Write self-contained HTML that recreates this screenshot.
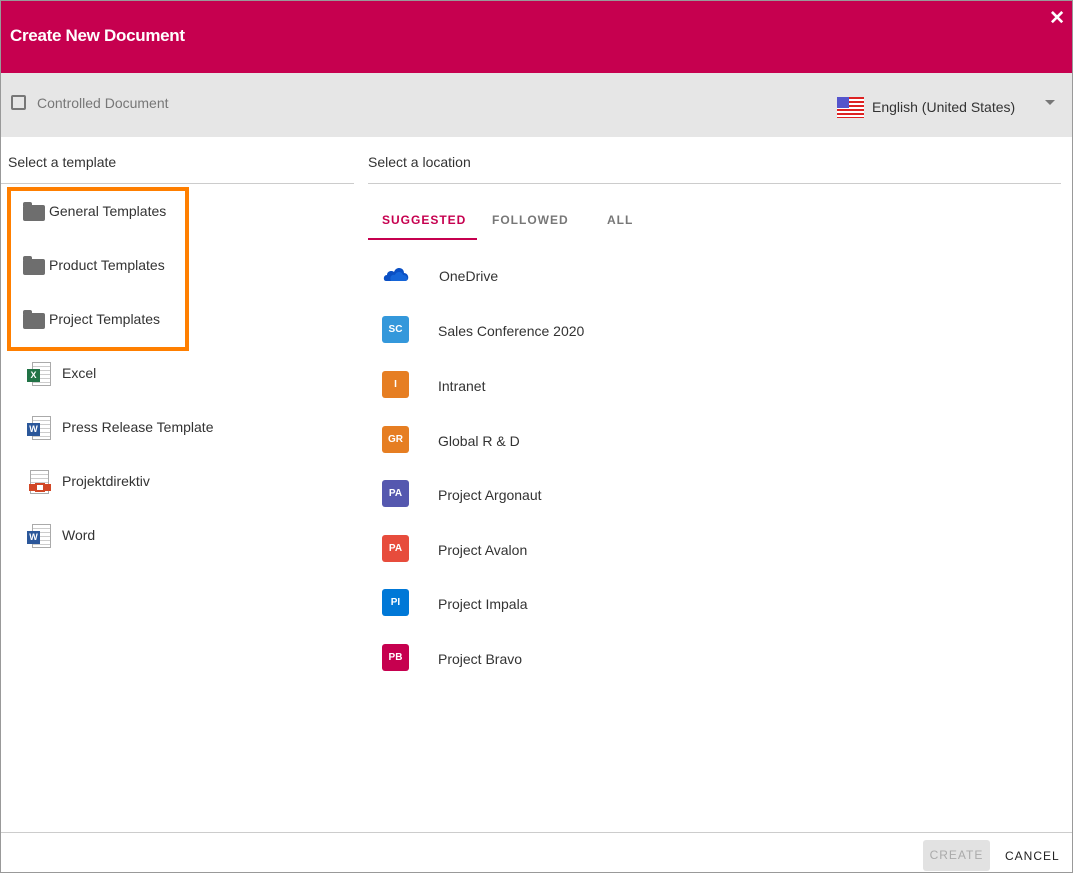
<!DOCTYPE html>
<html><head><style>
*{margin:0;padding:0;box-sizing:border-box}
body{width:1073px;height:873px;font-family:"Liberation Sans",sans-serif;background:#fff;position:relative;overflow:hidden;color:#333;font-size:14px}
.frame{position:absolute;left:0;top:0;width:1073px;height:873px;border:1px solid #999}
.hdr{position:absolute;left:1px;top:1px;width:1071px;height:72px;background:#c6004f;color:#fff}
.hdr h1{position:absolute;left:9px;top:25px;font-size:17px;font-weight:bold;letter-spacing:-0.3px}
.x{position:absolute;right:7px;top:6px;font-size:19px;font-weight:bold}
.bar{position:absolute;left:1px;top:73px;width:1071px;height:64px;background:#e6e6e6}
.cb{position:absolute;left:10px;top:22px;width:15px;height:15px;border:2px solid #777;border-radius:2px}
.abs{position:absolute;white-space:nowrap}
.flag{position:absolute;left:836px;top:24px;width:27px;height:21px;background:repeating-linear-gradient(#d22 0 2px,#fff 2px 4px)}
.flag:before{content:"";position:absolute;left:0;top:0;width:12px;height:11px;background:#55c}
.line{position:absolute;height:1px;background:#ccc}
.row{position:absolute;white-space:nowrap;font-size:14px;color:#333}
.fold{position:absolute;width:22px;height:16px;background:#6e6e6e;border-radius:2px}
.fold:before{content:"";position:absolute;left:0;top:-3px;width:9px;height:4px;background:#6e6e6e;border-radius:2px 2px 0 0}
.doc{position:absolute;width:19px;height:24px;border:1px solid #aaa;background:repeating-linear-gradient(#fff 0 3px,#ccc 3px 4px)}
.badge{position:absolute;left:11px;top:8px;width:13px;height:13px;color:#fff;font-size:9px;font-weight:bold;text-align:center;line-height:13px}
.sq{position:absolute;left:382px;width:27px;height:27px;border-radius:3px;color:#fff;font-size:10px;font-weight:bold;text-align:center;line-height:28px}
.tab{position:absolute;top:213px;font-size:12px;letter-spacing:1px;font-weight:bold;color:#777}
</style></head><body>
<div class="hdr"><h1>Create New Document</h1><div class="x">✕</div></div>
<div class="bar"><div class="cb"></div><div class="abs" style="left:36px;top:22px;color:#777">Controlled Document</div>
<div class="flag"></div><div class="abs" style="left:871px;top:26px;color:#333">English (United States)</div>
<div class="abs" style="left:1044px;top:27px;width:0;height:0;border:5px solid transparent;border-top-color:#777"></div></div>
<div class="abs" style="left:8px;top:154px">Select a template</div>
<div class="line" style="left:1px;top:183px;width:353px"></div>
<div class="abs" style="left:368px;top:154px">Select a location</div>
<div class="line" style="left:368px;top:183px;width:693px"></div>
<div style="position:absolute;left:7px;top:187px;width:182px;height:164px;border:4px solid #ff7f00"></div>
<div class="fold" style="left:23px;top:205px"></div><div class="row" style="left:49px;top:203px">General Templates</div>
<div class="fold" style="left:23px;top:259px"></div><div class="row" style="left:49px;top:257px">Product Templates</div>
<div class="fold" style="left:23px;top:313px"></div><div class="row" style="left:49px;top:311px">Project Templates</div>
<div class="doc" style="left:32px;top:362px"></div><div class="badge" style="left:27px;top:369px;background:#217346">X</div><div class="row" style="left:62px;top:365px">Excel</div>
<div class="doc" style="left:32px;top:416px"></div><div class="badge" style="left:27px;top:423px;background:#2b579a">W</div><div class="row" style="left:62px;top:419px">Press Release Template</div>
<div class="doc" style="left:30px;top:470px"></div><div style="position:absolute;left:29px;top:484px;width:22px;height:7px;background:#d24726"></div><div style="position:absolute;left:35px;top:483px;width:10px;height:9px;border:2px solid #d24726;background:#fff"></div><div class="row" style="left:62px;top:473px">Projektdirektiv</div>
<div class="doc" style="left:32px;top:524px"></div><div class="badge" style="left:27px;top:531px;background:#2b579a">W</div><div class="row" style="left:62px;top:527px">Word</div>
<div class="tab" style="left:382px;color:#c6004f">SUGGESTED</div>
<div class="tab" style="left:492px">FOLLOWED</div>
<div class="tab" style="left:607px">ALL</div>
<div style="position:absolute;left:368px;top:238px;width:109px;height:2px;background:#c6004f"></div>
<svg style="position:absolute;left:383px;top:265px" width="28" height="18" viewBox="0 0 28 18"><path d="M3 16 C0 16 0 10 4 10 C4 6 9 5 11 7 C13 1 21 2 21 8 C26 8 27 16 22 16 Z" fill="#0a4fc4"/><path d="M8 16 C6 12 9 9 12 10 C13 6 19 6 20 10 C25 10 26 16 22 16Z" fill="#1565d8"/></svg>
<div class="row" style="left:439px;top:268px">OneDrive</div>
<div class="sq" style="top:316px;background:#3498db">SC</div><div class="row" style="left:438px;top:323px">Sales Conference 2020</div>
<div class="sq" style="top:371px;background:#e67e22">I</div><div class="row" style="left:438px;top:378px">Intranet</div>
<div class="sq" style="top:426px;background:#e67e22">GR</div><div class="row" style="left:438px;top:433px">Global R &amp; D</div>
<div class="sq" style="top:480px;background:#5558af">PA</div><div class="row" style="left:438px;top:487px">Project Argonaut</div>
<div class="sq" style="top:535px;background:#e74c3c">PA</div><div class="row" style="left:438px;top:542px">Project Avalon</div>
<div class="sq" style="top:589px;background:#0078d7">PI</div><div class="row" style="left:438px;top:596px">Project Impala</div>
<div class="sq" style="top:644px;background:#c6004f">PB</div><div class="row" style="left:438px;top:651px">Project Bravo</div>
<div class="line" style="left:1px;top:832px;width:1071px"></div>
<div style="position:absolute;left:923px;top:840px;width:67px;height:31px;background:#e2e2e2;border-radius:3px;color:#aaa;font-size:12px;letter-spacing:1px;text-align:center;line-height:31px">CREATE</div>
<div class="abs" style="left:1005px;top:849px;font-size:12px;letter-spacing:1px;color:#222">CANCEL</div>
<div class="frame"></div>
</body></html>
